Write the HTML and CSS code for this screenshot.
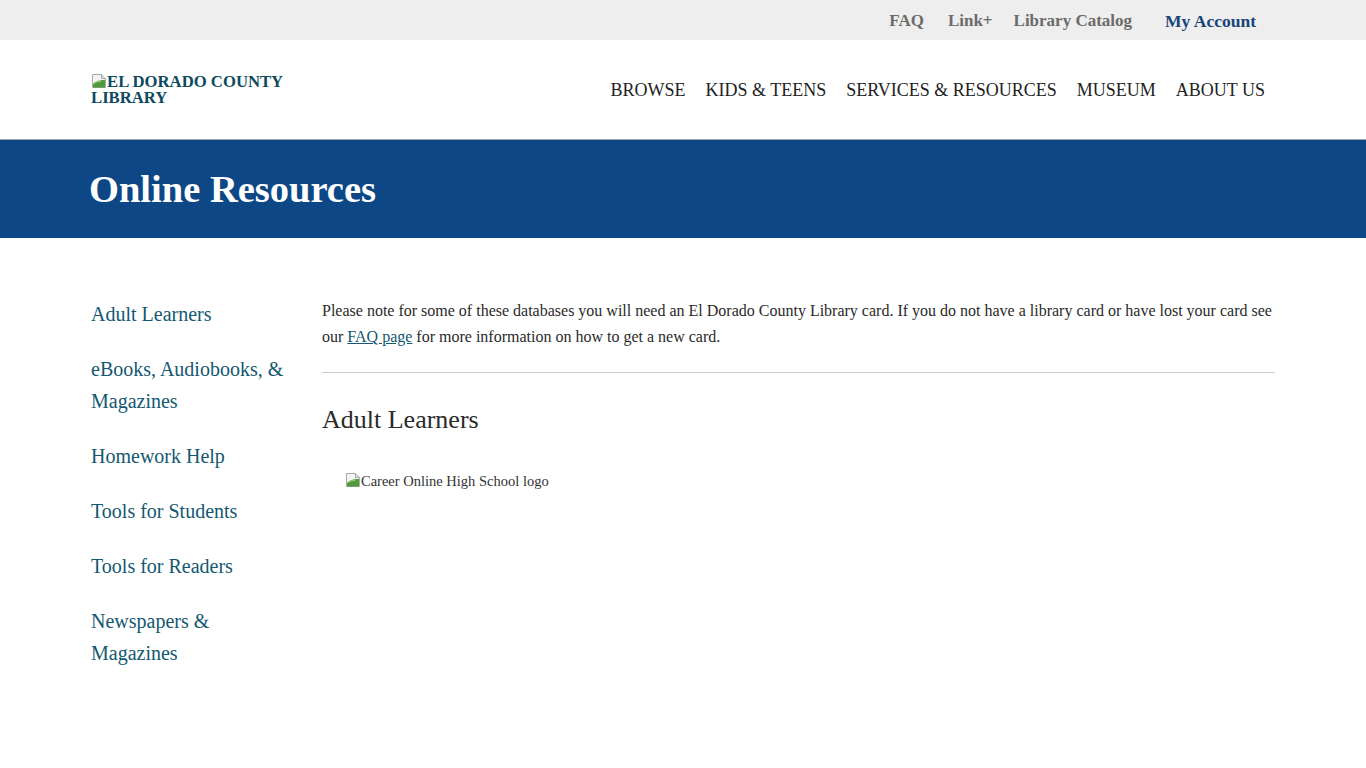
FILE: index.html
```html
<!DOCTYPE html>
<html lang="en">

<head>
	<meta charset="utf-8">
	<meta name="viewport" content="width=device-width, initial-scale=1.0">
	<title>Online Resources | El Dorado County Library</title>
	<link rel="stylesheet" href="styles.css">
</head>

<body>
	<div class="topbar">
		<div class="wrap topbar-links">
			<a href="#" class="faq">FAQ</a>
			<a href="#" class="linkplus">Link+</a>
			<a href="#" class="catalog">Library Catalog</a>
			<a href="#" class="account">My Account</a>
		</div>
	</div>

	<header class="header">
		<div class="wrap header-inner">
			<a href="#" class="logo">
				<svg class="broken" width="16" height="16" viewBox="0 0 16 16">
					<path d="M1.5 1.5h9l4 4v9h-13z" fill="#f4f4f4" stroke="#a9a9a9"/>
					<path d="M10.5 1.5v4h4" fill="#ddd" stroke="#a9a9a9"/>
					<path d="M2 14.5V11c3-3 6-4 12-4v7.5z" fill="#4f9a3c"/>
					<path d="M2 11c3-2 5-2.5 8-2.5" fill="none" stroke="#9fd27f"/>
				</svg>EL DORADO COUNTY LIBRARY
			</a>
			<nav class="mainnav">
				<a href="#">BROWSE</a>
				<a href="#">KIDS &amp; TEENS</a>
				<a href="#">SERVICES &amp; RESOURCES</a>
				<a href="#">MUSEUM</a>
				<a href="#">ABOUT US</a>
			</nav>
		</div>
	</header>

	<div class="banner">
		<div class="wrap">
			<h1>Online Resources</h1>
		</div>
	</div>

	<div class="wrap page">
		<ul class="sidebar">
			<li><a href="#">Adult Learners</a></li>
			<li><a href="#">eBooks, Audiobooks, &amp; Magazines</a></li>
			<li><a href="#">Homework Help</a></li>
			<li><a href="#">Tools for Students</a></li>
			<li><a href="#">Tools for Readers</a></li>
			<li><a href="#">Newspapers &amp; Magazines</a></li>
		</ul>

		<main class="content">
			<p class="note">Please note for some of these databases you will need an El Dorado County Library card. If you do not have a library card or have lost your card see our <a href="#">FAQ page</a> for more information on how to get a new card.</p>
			<hr>
			<h2>Adult Learners</h2>
			<div class="resource">
				<svg class="broken" width="16" height="16" viewBox="0 0 16 16">
					<path d="M1.5 1.5h9l4 4v9h-13z" fill="#f4f4f4" stroke="#a9a9a9"/>
					<path d="M10.5 1.5v4h4" fill="#ddd" stroke="#a9a9a9"/>
					<path d="M2 14.5V11c3-3 6-4 12-4v7.5z" fill="#4f9a3c"/>
					<path d="M2 11c3-2 5-2.5 8-2.5" fill="none" stroke="#9fd27f"/>
				</svg>Career Online High School logo
			</div>
		</main>
	</div>
</body>

</html>
```

FILE: styles.css
```css
* {
	box-sizing: border-box;
}

body {
	margin: 0;
	font-family: "Liberation Serif", "Times New Roman", serif;
	color: #222;
	background: #fff;
}

a {
	text-decoration: none;
}

.wrap {
	width: 1186px;
	margin: 0 auto;
}

/* top bar */

.topbar {
	background: #eee;
	height: 40px;
}

.topbar-links {
	display: flex;
	justify-content: flex-end;
	align-items: center;
	height: 40px;
	padding: 2px 20px 0 0;
	font-size: 17px;
	font-weight: bold;
}

.topbar-links a {
	color: #6b6b6b;
}

.topbar-links .linkplus {
	margin-left: 24px;
	font-weight: 600;
}

.topbar-links .catalog {
	margin-left: 21px;
}

.topbar-links .account {
	margin-left: 33px;
	font-size: 17.5px;
	color: #16457a;
}

/* header */

.header {
	height: 100px;
	border-bottom: 1px solid #9aa5ad;
}

.header-inner {
	display: flex;
	justify-content: space-between;
	align-items: center;
	height: 99px;
}

.logo {
	display: block;
	width: 205px;
	margin-left: 1px;
	margin-bottom: 1px;
	font-size: 16.7px;
	font-weight: bold;
	line-height: 16px;
	color: #0d4a5e;
}

.broken {
	vertical-align: -2px;
}

.mainnav {
	display: flex;
	gap: 20px;
	margin: 0 11px 0 0;
	padding-top: 1px;
	font-size: 18px;
}

.mainnav a {
	color: #222;
}

/* banner */

.banner {
	background: #0d4785;
	height: 98px;
}

.banner h1 {
	margin: 0 0 0 -1px;
	padding-top: 28px;
	font-size: 38.5px;
	line-height: 42px;
	color: #fff;
}

/* page */

.page {
	display: flex;
	padding-top: 60px;
}

.sidebar {
	list-style: none;
	margin: 0 31px 0 1px;
	padding: 0;
	width: 200px;
	flex-shrink: 0;
}

.sidebar li {
	margin-bottom: 23px;
	font-size: 20px;
	line-height: 32px;
}

.sidebar a {
	color: #135870;
}

.content {
	flex: 1;
	margin-right: 1px;
}

.note {
	margin: 0;
	padding-top: 0;
	font-size: 16px;
	line-height: 26px;
	color: #2a2a2a;
}

.note a {
	color: #135870;
	text-decoration: underline;
}

.content hr {
	border: none;
	border-top: 1px solid #ccc;
	margin: 22px 0 0;
}

.content h2 {
	margin: 32px 0 0;
	font-size: 26px;
	font-weight: normal;
	line-height: 30px;
	color: #2a2a2a;
}

.resource {
	margin: 37px 0 0 23px;
	font-size: 14.5px;
	color: #333;
}
```
